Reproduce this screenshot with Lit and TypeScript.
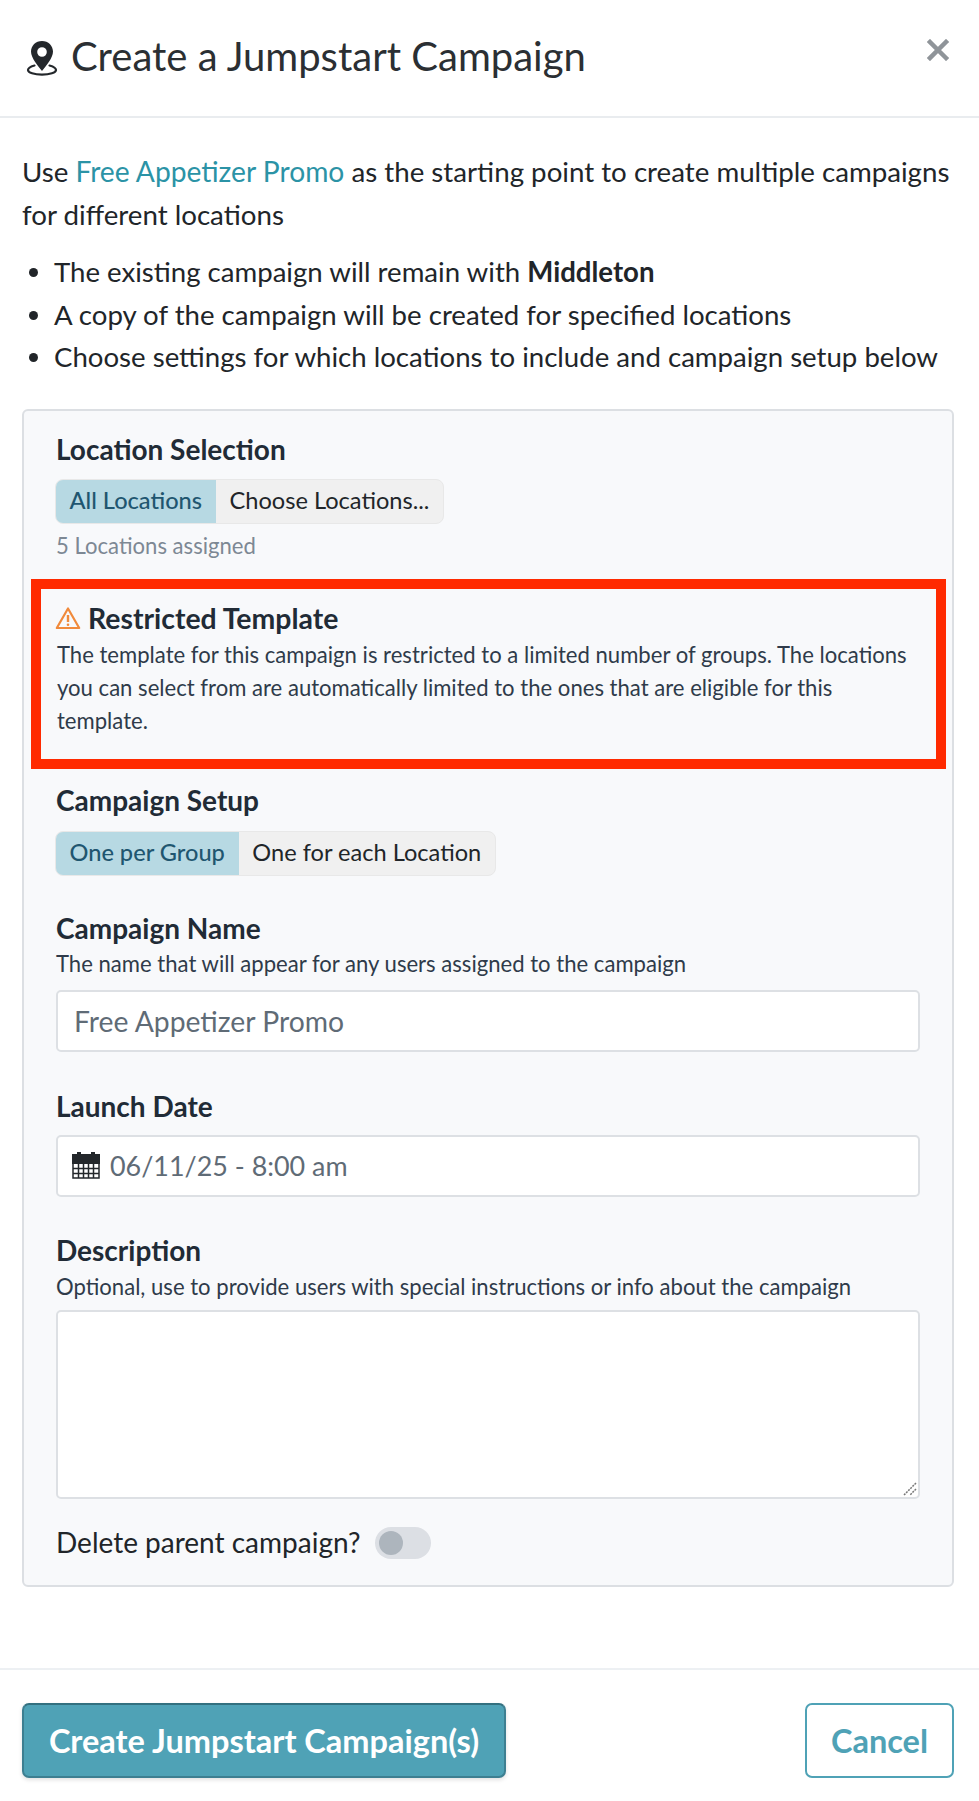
import { LitElement, html, css } from "lit";
import { customElement } from "lit/decorators.js";

@customElement("app-root")
export class AppRoot extends LitElement {
  static styles = css`
    :host { display: block; width: 979px; height: 1801px; background: #fff; font-family: Lato, "Liberation Sans", sans-serif; color: #212529; overflow: hidden; }
    * { box-sizing: border-box; }
    .header { height: 118px; border-bottom: 2px solid #e9ecef; padding: 0 1px 0 26px; display: flex; align-items: flex-start; }
    .title { display: flex; align-items: center; margin-top: 32px; height: 48px; font-size: 40px; font-weight: 400; color: #2b2f33; gap: 13px; flex: 1; }
    .pin { width: 32px; height: 36px; margin-top: 3px; }
    .close { width: 22px; height: 22px; margin: 39px 29px 0 0; }
    .body { padding: 0 25px 0 22px; }
    .intro { margin: 32px 0 0; font-size: 27.7px; line-height: 43px; color: #212529; }
    a { color: #2b93a6; text-decoration: none; font-size: 28.2px; }
    ul { margin: 15px 0 0; padding: 0 0 0 32px; font-size: 27.6px; line-height: 42.5px; }
    .panel { margin-top: 30px; height: 1178px; border: 2px solid #dcdfe3; border-radius: 6px; background: #f8f9fb; padding: 20px 32px 0; display: flex; flex-direction: column; align-items: stretch; }
    .label { font-size: 28px; font-weight: 700; line-height: 36px; color: #212b36; }
    .help { font-size: 22.1px; line-height: 30px; color: #2f3b4a; }
    .seg { display: inline-flex; align-self: flex-start; height: 45px; background: #f0f0f0; border: 1px solid #e8e8e8; border-radius: 8px; overflow: hidden; font-size: 23.6px; margin-left: -1px; }
    .seg span { display: flex; align-items: center; padding: 0 14px 3px 13.5px; color: #212529; white-space: nowrap; }
    .seg .on { background: #b7d9e3; color: #1f5670; font-weight: 500; }
    .assigned { font-size: 22.1px; line-height: 30px; color: #7d8894; margin-top: 7px; }
    .restricted { margin: 18px -26px 0 -25px; height: 190px; border: 10px solid #ff2a00; padding: 12px 16px 0; }
    .rhead { display: flex; align-items: center; gap: 7px; font-size: 28.4px; font-weight: 700; line-height: 34px; color: #212b36; margin-left: -2px; }
    .warn { width: 26px; height: 24px; }
    .rtext { font-size: 22.1px; line-height: 33px; color: #2f3b4a; margin-top: 3px; }
    .field { height: 62px; border: 2px solid #dde0e4; border-radius: 5px; background: #fff; font-size: 28.3px; color: #5f6b76; display: flex; align-items: center; padding: 0 16px; flex: none; }
    .date { font-size: 26.9px; gap: 10px; padding-left: 14px; }
    .cal { width: 28px; height: 28px; margin-top: -2px; }
    .area { height: 189px; align-items: flex-end; justify-content: flex-end; padding: 0 1px 1px 0; }
    .delete { display: flex; align-items: center; gap: 15px; margin-top: 25px; font-size: 28px; line-height: 36px; color: #212529; }
    .switch { width: 56px; height: 32px; border-radius: 16px; background: #dcdfe4; padding: 4px; margin-top: 3px; }
    .knob { width: 24px; height: 24px; border-radius: 50%; background: #adb5bd; }
    .footer { margin-top: 81px; border-top: 2px solid #edf0f3; padding: 33px 25px 0 22px; display: flex; justify-content: space-between; }
    .btn { height: 75px; border-radius: 7px; font-size: 32.5px; font-weight: 700; display: flex; align-items: center; justify-content: center; }
    .primary { width: 484px; background: #4fa2b6; border: 2px solid #3d7f91; border-top-color: #33707f; color: #fff; box-shadow: 0 2px 4px rgba(0,0,0,.12); }
    .secondary { width: 149px; background: #fff; border: 2px solid #4fa2b6; color: #4fa2b6; }
    .m10 { margin-top: 12px; }
    .m13 { margin-top: 13px; }
    .m11 { margin-top: 11px; }
    .m9 { margin-top: 11px; }
    .m8 { margin-top: 8px; }
    .h3 { margin-top: 3px; }
    .h4 { margin-top: 4px; }
    .setup { margin-top: 13px; }
    .name { margin-top: 34px; }
    .launch { margin-top: 36px; }
    .desc { margin-top: 35px; }
  `;

  render() {
    return html`
      <div class="header">
        <div class="title">
          <svg class="pin" viewBox="0 0 32 36">
            <path fill="#23272b" fill-rule="evenodd" d="M16 1C9.6 1 5 5.8 5 11.6c0 6.6 7 14.4 11 19.4 4-5 11-12.8 11-19.4C27 5.8 22.4 1 16 1zm0 6.2a4.8 4.8 0 1 1 0 9.6 4.8 4.8 0 0 1 0-9.6z"/>
            <path fill="none" stroke="#23272b" stroke-width="2.2" stroke-linecap="round" d="M8.5 25.5C4.5 26.6 2 28.2 2 30c0 2.6 6.2 4.6 14 4.6S30 32.600 30 30c0-1.800-2.500-3.400-6.500-4.500"/>
          </svg>
          <span>Create a Jumpstart Campaign</span>
        </div>
        <svg class="close" viewBox="0 0 22 22"><path d="M3 3l16 16M19 3L3 19" stroke="#8f9499" stroke-width="4.500" stroke-linecap="square" fill="none"/></svg>
      </div>
      <div class="body">
        <p class="intro">Use <a>Free Appetizer Promo</a> as the starting point to create multiple campaigns for different locations</p>
        <ul>
          <li>The existing campaign will remain with <b>Middleton</b></li>
          <li>A copy of the campaign will be created for specified locations</li>
          <li>Choose settings for which locations to include and campaign setup below</li>
        </ul>
        <div class="panel">
          <div class="label">Location Selection</div>
          <div class="seg m10"><span class="on">All Locations</span><span>Choose Locations...</span></div>
          <div class="assigned">5 Locations assigned</div>
          <div class="restricted">
            <div class="rhead">
              <svg class="warn" viewBox="0 0 26 24">
                <path d="M13 2.500L1.800 22h22.400z" fill="none" stroke="#f08a3c" stroke-width="2.200" stroke-linejoin="round"/>
                <path d="M13 9v7" stroke="#f08a3c" stroke-width="2.400"/><circle cx="13" cy="18.800" r="1.300" fill="#f08a3c"/>
              </svg>
              <span>Restricted Template</span>
            </div>
            <div class="rtext">The template for this campaign is restricted to a limited number of groups. The locations you can select from are automatically limited to the ones that are eligible for this template.</div>
          </div>
          <div class="label setup">Campaign Setup</div>
          <div class="seg m13"><span class="on">One per Group</span><span>One for each Location</span></div>
          <div class="label name">Campaign Name</div>
          <div class="help h3">The name that will appear for any users assigned to the campaign</div>
          <div class="field m9">Free Appetizer Promo</div>
          <div class="label launch">Launch Date</div>
          <div class="field date m11">
            <svg class="cal" viewBox="0 0 28 28">
              <path fill="#23272b" d="M1 3h4V1h4v2h10V1h4v2h6v10H0V3z"/>
              <path fill="none" stroke="#23272b" stroke-width="1.500" d="M1 13v14h26V13M1 17.500h26M1 22.500h26M6.500 13v14M11.500 13v14M16.500 13v14M21.500 13v14"/>
            </svg>
            <span>06/11/25 - 8:00 am</span>
          </div>
          <div class="label desc">Description</div>
          <div class="help h4">Optional, use to provide users with special instructions or info about the campaign</div>
          <div class="field area m8">
            <svg width="15" height="15" viewBox="0 0 15 15"><path d="M14 2L2 14M14 8l-6 6" stroke="#777" stroke-width="1.500" stroke-dasharray="2 1" fill="none"/></svg>
          </div>
          <div class="delete"><span>Delete parent campaign?</span><div class="switch"><div class="knob"></div></div></div>
        </div>
      </div>
      <div class="footer">
        <div class="btn primary">Create Jumpstart Campaign(s)</div>
        <div class="btn secondary">Cancel</div>
      </div>
    `;
  }
}
